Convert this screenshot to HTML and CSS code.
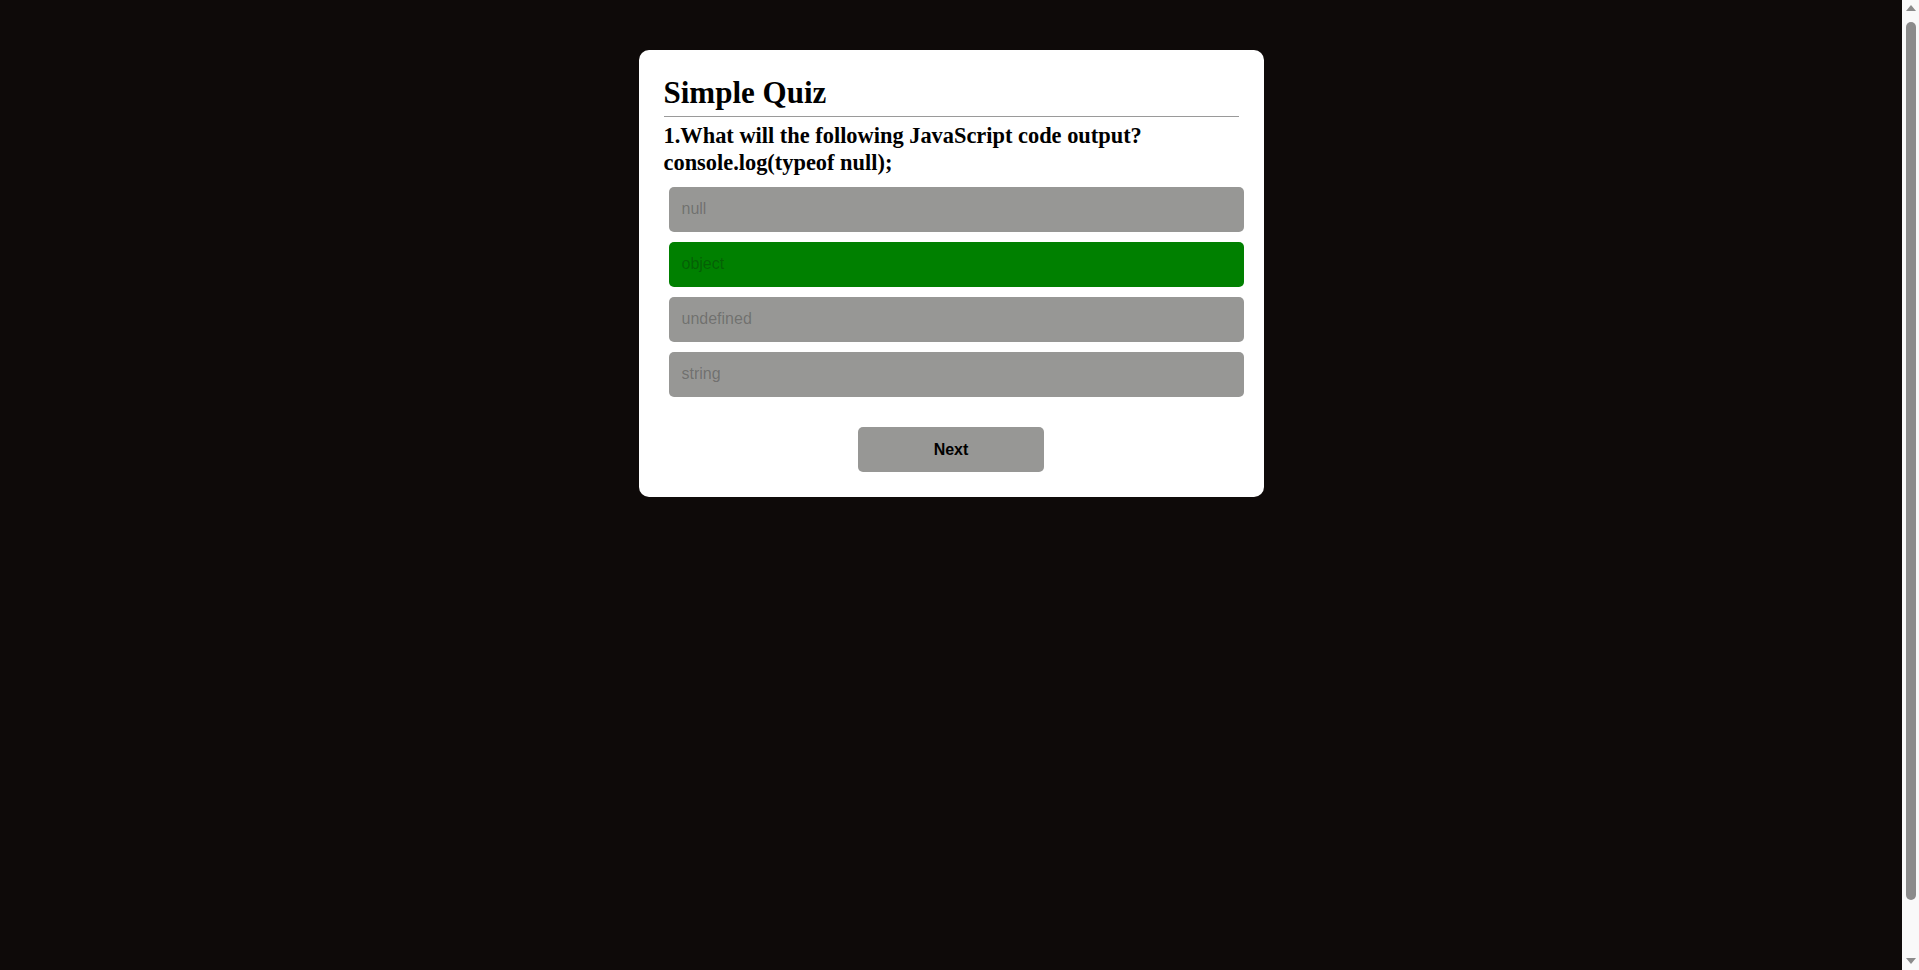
FILE: index.html
```html
<!DOCTYPE html>
<html lang="en">
<head>
<meta charset="utf-8">
<title>Simple Quiz</title>
<link rel="stylesheet" href="styles.css">
</head>
<body>
  <main class="page">
    <div class="app">
      <h1 class="title">Simple Quiz</h1>
      <div class="quiz">
        <h2 class="question">1.What will the following JavaScript code output? console.log(typeof null);</h2>
        <div class="answers">
          <button class="answer" disabled>null</button>
          <button class="answer correct" disabled>object</button>
          <button class="answer" disabled>undefined</button>
          <button class="answer" disabled>string</button>
        </div>
        <button class="next">Next</button>
      </div>
    </div>
  </main>
  <div class="scrollbar" aria-hidden="true">
    <span class="arrow arrow-up"></span>
    <span class="thumb"></span>
    <span class="arrow arrow-down"></span>
  </div>
</body>
</html>
```

FILE: styles.css
```css
html {
  background: #0e0a09;
}

body {
  margin: 0;
  height: 100vh;
  display: flex;
  background: #0e0a09;
  font-family: "Liberation Serif", "Times New Roman", serif;
  overflow: hidden;
}

.page {
  flex: 1;
  padding-top: 50px;
}

.scrollbar {
  width: 17px;
  flex: none;
  display: flex;
  flex-direction: column;
  align-items: center;
  padding: 5px 0 6px;
  box-sizing: border-box;
  background: #f9f9f9;
}

.arrow {
  width: 0;
  height: 0;
  border-left: 5.5px solid transparent;
  border-right: 5.5px solid transparent;
}

.arrow-up {
  border-bottom: 6px solid #8b8b8b;
}

.arrow-down {
  border-top: 6px solid #8b8b8b;
}

.thumb {
  flex: 1;
  width: 10px;
  margin: 11px 0 58px;
  background: #8b8b8b;
  border-radius: 5px;
}

.app {
  width: 575px;
  margin: 0 auto;
  padding: 25px;
  background: #ffffff;
  border-radius: 10px;
}

.title {
  margin: 0;
  padding-bottom: 5px;
  font-size: 31px;
  line-height: 36px;
  font-weight: bold;
  color: #000;
  border-bottom: 1px solid #9a9a9a;
}

.question {
  margin: 6px 0 0;
  font-size: 22.4px;
  line-height: 26.5px;
  font-weight: bold;
  color: #000;
}

.answers {
  display: flex;
  flex-direction: column;
  gap: 10px;
  margin-top: 11px;
  margin-left: 5px;
}

.answer {
  width: 575px;
  height: 45px;
  padding: 0 13px 1px;
  border: none;
  border-radius: 5px;
  background: #979795;
  color: rgba(16, 16, 16, 0.3);
  font-family: "Liberation Sans", Arial, sans-serif;
  font-size: 16px;
  text-align: left;
}

.answer.correct {
  background: #008000;
}

.next {
  display: block;
  width: 186px;
  height: 45px;
  margin: 30px auto 0;
  border: none;
  border-radius: 5px;
  background: #979795;
  color: #000;
  font-family: "Liberation Sans", Arial, sans-serif;
  font-size: 16px;
  font-weight: bold;
}
```
